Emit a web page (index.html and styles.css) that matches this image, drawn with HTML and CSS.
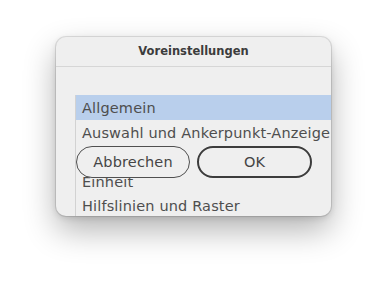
FILE: index.html
```html
<!DOCTYPE html>
<html lang="de">
<head>
<meta charset="utf-8">
<title>Voreinstellungen</title>
<link rel="stylesheet" href="styles.css">
</head>
<body>
<div class="dialog">
  <div class="titlebar">Voreinstellungen</div>
  <div class="content">
    <ul class="list">
      <li class="row selected">Allgemein</li>
      <li class="row">Auswahl und Ankerpunkt-Anzeige</li>
      <li class="row">Schrift</li>
      <li class="row">Einheit</li>
      <li class="row">Hilfslinien und Raster</li>
      <li class="row">Intelligente Hilfslinien</li>
    </ul>
    <div class="buttons">
      <button class="btn cancel">Abbrechen</button>
      <button class="btn ok">OK</button>
    </div>
  </div>
</div>
</body>
</html>
```

FILE: styles.css
```css
html, body {
  margin: 0;
  padding: 0;
  background: #ffffff;
}
body {
  width: 387px;
  height: 290px;
  overflow: hidden;
  font-family: "DejaVu Sans", "Liberation Sans", sans-serif;
  padding-top: 37px;
  padding-left: 56px;
  box-sizing: border-box;
}
.dialog {
  width: 275px;
  height: 179px;
  background: #efefef;
  border-radius: 10px;
  overflow: hidden;
  box-shadow: 0 0 0 1px rgba(0,0,0,0.10), 0 14px 32px rgba(0,0,0,0.30), 0 2px 6px rgba(0,0,0,0.12);
  display: flex;
  flex-direction: column;
}
.titlebar {
  height: 29px;
  line-height: 29px;
  text-align: center;
  font-size: 11.5px;
  font-weight: bold;
  color: #3c3c3c;
  border-bottom: 1px solid #d6d6d6;
  flex: none;
}
.content {
  position: relative;
  flex: 1;
  padding-top: 28px;
  padding-left: 19px;
}
.list {
  list-style: none;
  margin: 0;
  padding: 0;
  width: 300px;
  border-left: 1px solid #d2d2d2;
}
.row {
  height: 24.5px;
  box-sizing: border-box;
  padding: 2px 0 0 6px;
  line-height: 22.5px;
  font-size: 14.5px;
  letter-spacing: 0.15px;
  color: #4e4e4e;
  white-space: nowrap;
}
.row.selected {
  background: #b9cfec;
}
.buttons {
  position: absolute;
  top: 79px;
  left: 20px;
  display: flex;
  gap: 7px;
}
.btn {
  height: 32px;
  border-radius: 16px;
  background: #efefef;
  font-family: "DejaVu Sans", "Liberation Sans", sans-serif;
  font-size: 14.5px;
  letter-spacing: 0.15px;
  color: #454545;
  padding: 0;
  box-sizing: border-box;
  display: flex;
  align-items: center;
  justify-content: center;
}
.cancel {
  width: 114px;
  border: 1px solid #505050;
}
.ok {
  width: 115px;
  border: 2px solid #3c3c3c;
}
```
